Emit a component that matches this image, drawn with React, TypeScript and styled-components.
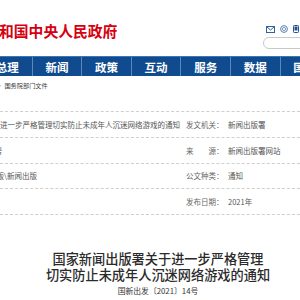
import React from 'react'
import styled, { createGlobalStyle } from 'styled-components'

const GlobalStyle = createGlobalStyle`
    html, body {
        margin: 0;
        padding: 0;
        background: #fff;
        overflow: hidden;
    }
    body {
        font-family: 'Noto Sans CJK SC', 'Noto Sans', sans-serif;
    }
`

const navItems = ['总理', '新闻', '政策', '互动', '服务', '数据', '国情']

type InfoRow = {
    text: string
    shift: number
    label: string
    value: string
}

const rows: InfoRow[] = [
    {
        text: '进一步严格管理切实防止未成年人沉迷网络游戏的通知',
        shift: 0,
        label: '发文机关：',
        value: '新闻出版署',
    },
    {
        text: '国新出发〔2021〕14号',
        shift: -75,
        label: '来　　源：',
        value: '新闻出版署网站',
    },
    {
        text: '新闻出版\\新闻出版',
        shift: -26,
        label: '公文种类：',
        value: '通知',
    },
    { text: '', shift: 0, label: '发布日期：', value: '2021年' },
]

function MailIcon(): JSX.Element {
    return (
        <svg width="9" height="7" viewBox="0 0 9 7">
            <rect x="0.5" y="0.5" width="8" height="6" fill="#fff" stroke="#2d62a3" />
            <path d="M0.8 0.8 L4.5 4 L8.2 0.8" fill="none" stroke="#2d62a3" />
        </svg>
    )
}

function WeiboIcon(): JSX.Element {
    return (
        <svg width="8" height="8" viewBox="0 0 8 8">
            <circle cx="4" cy="4" r="3.4" fill="#fff" stroke="#5a7fae" />
            <circle cx="4" cy="4" r="1.6" fill="none" stroke="#5a7fae" strokeWidth="0.8" />
        </svg>
    )
}

function PhoneIcon(): JSX.Element {
    return (
        <svg width="6" height="8" viewBox="0 0 6 8">
            <rect x="0.5" y="0.5" width="5" height="7" rx="0.8" fill="#fff" stroke="#1f5396" />
            <rect x="1.5" y="1.5" width="3" height="4" fill="#1f5396" />
        </svg>
    )
}

export default function App(): JSX.Element {
    return (
        <Page>
            <GlobalStyle />
            <Header>
                <SiteTitle>中华人民共和国中央人民政府</SiteTitle>
                <Tools>
                    <IconRow>
                        <MailIcon />
                        <WeiboIcon />
                        <PhoneIcon />
                    </IconRow>
                    <SearchBox />
                </Tools>
            </Header>

            <Nav>
                {navItems.map((item) => (
                    <NavItem key={item}>{item}</NavItem>
                ))}
            </Nav>

            <Crumbs>
                <CrumbArrow>&gt;</CrumbArrow>
                <span>国务院部门文件</span>
            </Crumbs>

            <InfoTable>
                {rows.map((row) => (
                    <Row key={row.label}>
                        <MainCell>
                            <Shifted shift={row.shift}>{row.text}</Shifted>
                        </MainCell>
                        <Label>{row.label}</Label>
                        <Value>{row.value}</Value>
                    </Row>
                ))}
            </InfoTable>

            <Article>
                <Heading>
                    国家新闻出版署关于进一步严格管理
                    <br />
                    切实防止未成年人沉迷网络游戏的通知
                </Heading>
                <DocNo>国新出发〔2021〕14号</DocNo>
            </Article>
        </Page>
    )
}

const Page = styled.div`
    width: 300px;
    height: 300px;
    overflow: hidden;
`

const Header = styled.header`
    height: 56px;
    display: flex;
    justify-content: space-between;
    align-items: flex-start;
    padding-top: 23px;
    box-sizing: border-box;
`

const SiteTitle = styled.h1`
    margin: 0 0 0 -75px;
    font-size: 14.8px;
    line-height: 16px;
    font-weight: 700;
    color: #d7000f;
    white-space: nowrap;
    letter-spacing: 0;
`

const Tools = styled.div`
    width: 37px;
    display: flex;
    flex-direction: column;
    padding-top: 2px;
`

const IconRow = styled.div`
    display: flex;
    align-items: center;
    gap: 5px;
    padding-left: 3px;
    height: 8px;
`

const SearchBox = styled.div`
    margin-top: 4px;
    width: 80px;
    height: 12px;
    border: 1px solid #c9c9c9;
    border-radius: 7px;
    box-sizing: border-box;
`

const Nav = styled.nav`
    height: 20px;
    display: flex;
    margin-left: -17px;
    background: #0f4b8e;
    border-top: 1px solid #3f74b5;
    box-sizing: border-box;
`

const NavItem = styled.div`
    flex: 0 0 49.6px;
    display: flex;
    align-items: center;
    justify-content: center;
    border-right: 1px solid #5d88bc;
    box-sizing: border-box;
    color: #fff;
    font-size: 11.5px;
    font-weight: 700;
    white-space: nowrap;
`

const Crumbs = styled.div`
    height: 35px;
    display: flex;
    align-items: flex-start;
    padding-top: 6px;
    box-sizing: border-box;
    gap: 3px;
    font-size: 6.2px;
    line-height: 8px;
    color: #444;
    margin-left: -2px;
`

const CrumbArrow = styled.span`
    color: #999;
`

const InfoTable = styled.div`
    border-top: 1px dashed #cfcfcf;
`

const Row = styled.div`
    height: 25.75px;
    display: grid;
    grid-template-columns: 186px 42px 1fr;
    align-items: center;
    border-bottom: 1px dashed #cfcfcf;
    box-sizing: border-box;
    font-size: 7.5px;
    color: #555;
    white-space: nowrap;
`

const MainCell = styled.div`
    overflow: hidden;
`

const Shifted = styled.span<{ shift: number }>`
    display: inline-block;
    margin-left: ${(p) => p.shift}px;
`

const Label = styled.div`
    color: #666;
`

const Value = styled.div`
    color: #555;
`

const Article = styled.article`
    padding: 36px 0 0 16px;
    text-align: center;
`

const Heading = styled.h2`
    margin: 0;
    font-size: 13.2px;
    line-height: 16px;
    font-weight: 500;
    color: #2b2b2b;
    white-space: nowrap;
`

const DocNo = styled.div`
    margin-top: 3px;
    font-size: 7.8px;
    line-height: 10px;
    color: #333;
`
